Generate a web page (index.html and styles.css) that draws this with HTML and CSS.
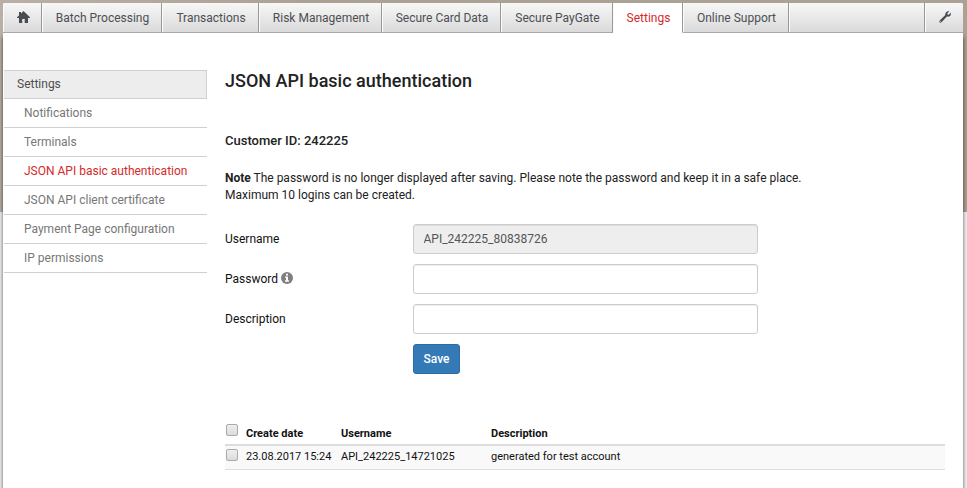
FILE: index.html
```
<!DOCTYPE html>
<html lang="en">
<head>
<meta charset="utf-8">
<title>JSON API basic authentication</title>
<link rel="stylesheet" href="styles.css">
</head>
<body>
<div class="panel">
  <nav class="tabs">
    <a class="tab"><svg class="home" viewBox="0 0 13 12"><path d="M6.5 0 13 6.3v.7h-2v5H7.7V8H5.2v4H2V7H0v-.7L2 4.4V1h2v1.4z"/></svg></a>
    <a class="tab">Batch Processing</a>
    <a class="tab">Transactions</a>
    <a class="tab">Risk Management</a>
    <a class="tab">Secure Card Data</a>
    <a class="tab">Secure PayGate</a>
    <a class="tab active">Settings</a>
    <a class="tab">Online Support</a>
    <span class="tab"></span>
    <a class="tab tools"><svg class="wrench" viewBox="0 0 12 12"><path d="M10.4.3 8.3 2.4l.2 1.2 1.2.2L11.8 1.7c.7 2.5-1.4 4.6-3.9 3.9L2.6 11.3c-1.3 1.2-3-.5-1.9-1.8L6.3 4.1C5.7 1.6 7.9-.4 10.4.3zM1.7 9.8a.5.5 0 1 0 .01 0z"/></svg></a>
  </nav>
  <div class="columns">
    <aside class="menu">
      <a class="head">Settings</a>
      <a>Notifications</a>
      <a>Terminals</a>
      <a class="current">JSON API basic authentication</a>
      <a>JSON API client certificate</a>
      <a>Payment Page configuration</a>
      <a>IP permissions</a>
    </aside>
    <main>
      <h1>JSON API basic authentication</h1>
      <h2>Customer ID: 242225</h2>
      <p class="note"><b>Note</b> The password is no longer displayed after saving. Please note the password and keep it in a safe place.<br>Maximum 10 logins can be created.</p>
      <form class="form">
        <label>Username</label><input type="text" value="API_242225_80838726" disabled>
        <label>Password <svg class="info" viewBox="0 0 12 12"><circle cx="6" cy="6" r="6"/><path d="M5 1.7h2v1.8H5zM4.2 4.6H7v3.7h.9v1.5H4.1V8.3H5V6h-.8z"/></svg></label><input type="text">
        <label>Description</label><input type="text">
        <span></span><button type="button">Save</button>
      </form>
      <table>
        <thead><tr><th class="c-check"><span class="check"></span></th><th class="c-date">Create date</th><th class="c-user">Username</th><th>Description</th></tr></thead>
        <tbody><tr><td><span class="check"></span></td><td>23.08.2017 15:24</td><td>API_242225_14721025</td><td>generated for test account</td></tr></tbody>
      </table>
    </main>
  </div>
</div>
</body>
</html>
```
FILE: styles.css
```
* { box-sizing: border-box; }
body {
  margin: 0;
  height: 488px;
  padding: 3px 4px 0 3px;
  overflow: hidden;
  font: 12px/17px Roboto, sans-serif;
  color: #111;
  background: linear-gradient(90deg, #b9afa4, #aca294 310px, #aca294) 0 0 / 100% 212px no-repeat #f2f2f2;
}
.panel {
  height: 485px;
  background: #fff;
  border-radius: 2px 2px 0 0;
  box-shadow: 0 34px 4px rgba(0, 0, 0, .65);
}
.tabs {
  display: grid;
  grid-template-columns: 39px 120px 97px 123px 119px 112px 70px 106px 136px 1fr;
  height: 30px;
}
.tab {
  display: flex;
  align-items: center;
  justify-content: center;
  padding: 1px 0 0 2px;
  border-right: 1px solid #999;
  border-bottom: 1px solid #aaa;
  box-shadow: inset 1px 0 #fafafa;
  background: linear-gradient(#f7f7f7, #dadada);
  color: #4c4f53;
  white-space: nowrap;
}
.tab:first-child { border-top-left-radius: 2px; }
.tab.active { background: #fff; color: #d42a2a; border-bottom-color: #fff; }
.tab.tools { border-right: 0; border-top-right-radius: 2px; }
.tab svg { fill: #494c52; margin-bottom: 2px; }
.home { width: 13px; height: 12px; }
.wrench { width: 12px; height: 12px; }
.columns { display: flex; padding: 37px 18px 0 1px; }
.menu { width: 203px; margin-right: 18px; }
.menu a {
  display: block;
  height: 29px;
  padding: 6px 0 0 20px;
  line-height: 17px;
  border-bottom: 1px solid #d0d0d0;
  color: #777;
}
.menu .head {
  padding: 5px 0 0 13px;
  border: 1px solid #d0d0d0;
  border-left: 0;
  background: #ededed;
  color: #4d4d4d;
}
.menu .current { color: #d42a2a; }
main { width: 720px; }
h1 { margin: 0; font-size: 18px; line-height: 22px; font-weight: 500; color: #222; }
h2 { margin: 40px 0 0; font-size: 13px; line-height: 18px; font-weight: 500; color: #222; }
.note { margin: 20px 0 0; color: #222; }
.form {
  display: grid;
  grid-template-columns: 188px 345px;
  row-gap: 10px;
  margin: 20px 0 0;
}
label { height: 30px; padding-top: 1px; line-height: 29px; }
.info { width: 12px; height: 12px; vertical-align: -1px; fill: #808080; }
.info path { fill: #fff; }
input {
  height: 30px;
  padding: 0 9.5px;
  border: 1px solid #ccc;
  border-radius: 3px;
  background: #fff;
  color: #555;
  font: inherit;
  box-shadow: inset 0 1px 1px rgba(0, 0, 0, .075);
}
input:disabled { background: #eee; }
button {
  width: 47px;
  height: 30px;
  padding: 0;
  border: 1px solid #2e6da4;
  border-radius: 3px;
  background: #337ab7;
  color: #fff;
  font: 500 12px/28px Roboto, sans-serif;
}
table {
  width: 720px;
  margin-top: 49px;
  table-layout: fixed;
  border-collapse: separate;
  border-spacing: 0;
  font-size: 11px;
}
th, td { padding: 0; text-align: left; vertical-align: top; }
th { height: 23px; border-bottom: 2px solid #ddd; line-height: 21px; }
td { height: 24px; border-bottom: 1px solid #ddd; background: #f9f9f9; line-height: 22px; }
th:not(.c-check) { padding-top: 1px; line-height: 20px; }
.c-check { width: 21px; }
.c-date { width: 95px; }
.c-user { width: 150px; }
.check {
  display: block;
  width: 12px;
  height: 12px;
  margin: 1px 0 0 1px;
  border: 1px solid #aaa;
  border-radius: 2px;
  background: linear-gradient(#eee, #dcdcdc);
}
td .check { margin-top: 3px; }
```
